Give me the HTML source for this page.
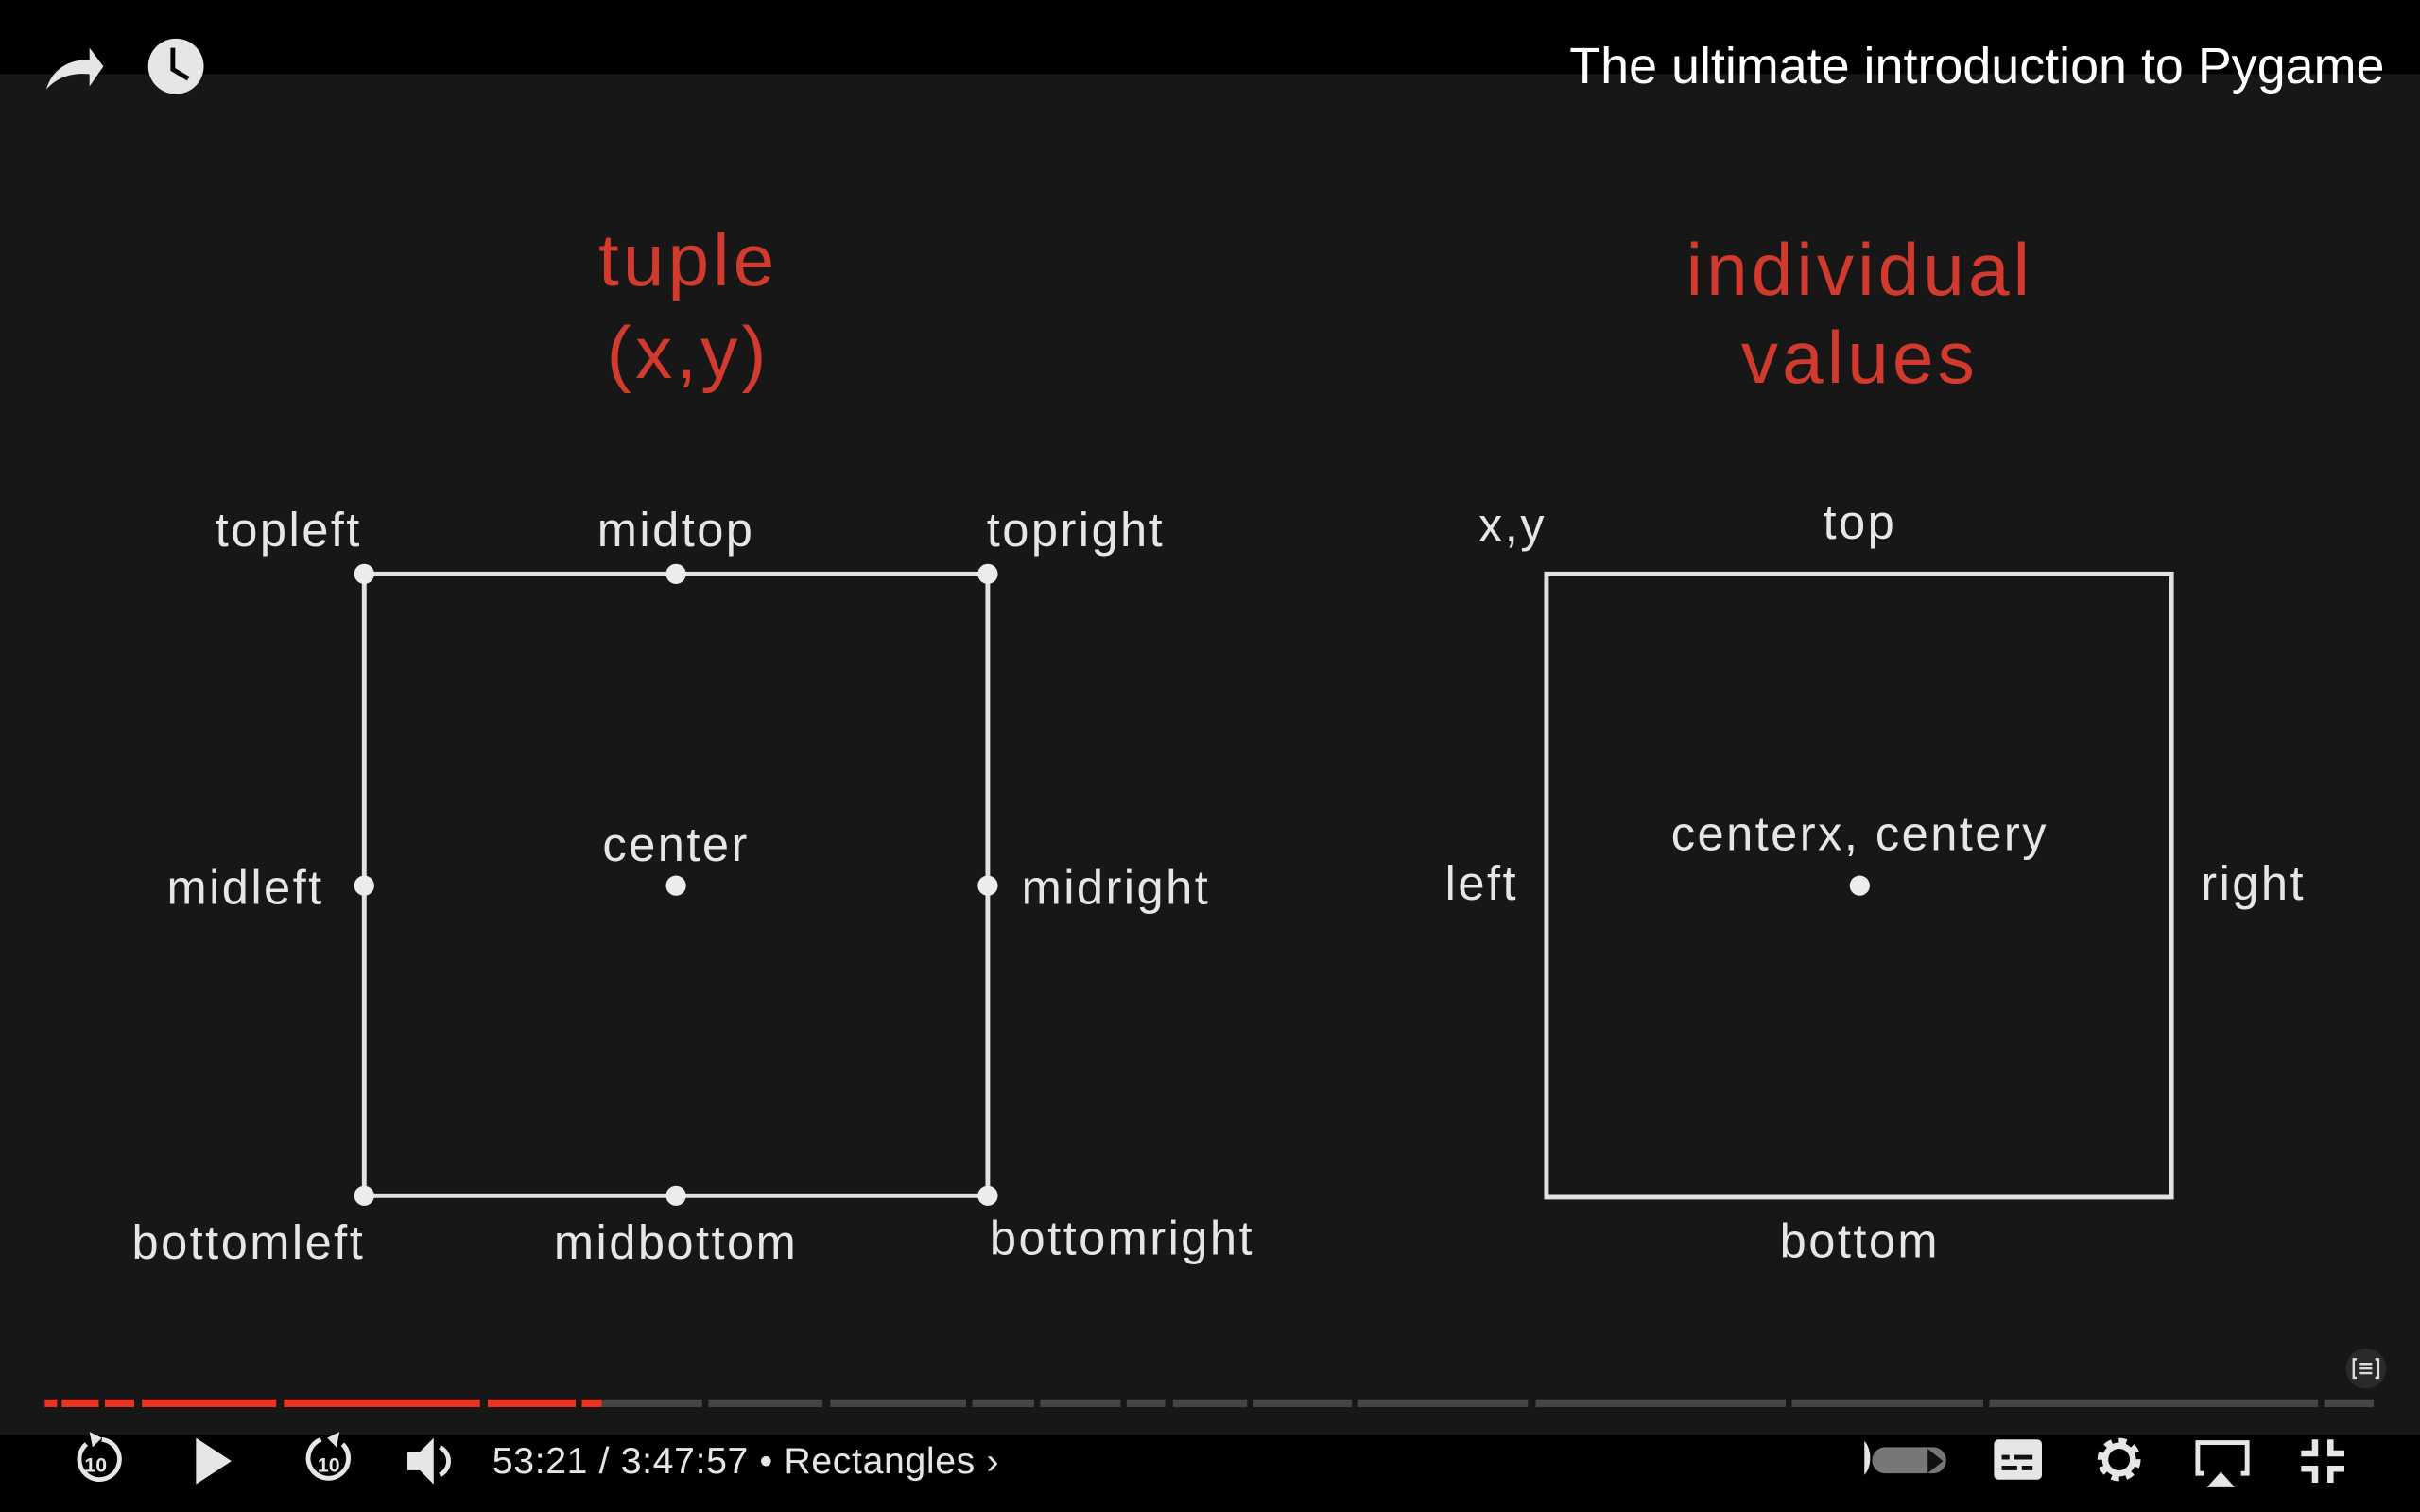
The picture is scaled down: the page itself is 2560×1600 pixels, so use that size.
<!DOCTYPE html>
<html><head><style>
html,body{margin:0;padding:0;background:#000;width:2560px;height:1600px;overflow:hidden}
svg{display:block}
</style></head><body>
<svg width="2560" height="1600" viewBox="0 0 1568 980" xmlns="http://www.w3.org/2000/svg" font-family="Liberation Sans, sans-serif">
<rect width="1568" height="980" fill="#000"/>
<rect y="48" width="1568" height="882" fill="#171717"/>
<g fill="#d23a2e" font-size="48" text-anchor="middle" letter-spacing="2.5">
<text x="446" y="185">tuple</text>
<text x="446" y="245">(x,y)</text>
<text x="1205" y="191">individual</text>
<text x="1205" y="248">values</text>
</g>
<g fill="none" stroke="#e2e2e2" stroke-width="3">
<rect x="236" y="372" width="404" height="403"/>
<rect x="1002" y="372" width="405" height="404"/>
</g>
<g fill="#ececec">
<circle cx="236" cy="372" r="6.5"/><circle cx="438" cy="372" r="6.5"/><circle cx="640" cy="372" r="6.5"/>
<circle cx="236" cy="574" r="6.5"/><circle cx="438" cy="574" r="6.5"/><circle cx="640" cy="574" r="6.5"/>
<circle cx="236" cy="775" r="6.5"/><circle cx="438" cy="775" r="6.5"/><circle cx="640" cy="775" r="6.5"/>
<circle cx="1205" cy="574" r="6.5"/>
</g>
<g fill="#e6e6e6" font-size="31" text-anchor="middle" letter-spacing="1.5">
<text x="187" y="354">topleft</text>
<text x="438" y="354">midtop</text>
<text x="697" y="354">topright</text>
<text x="159" y="586">midleft</text>
<text x="438" y="558">center</text>
<text x="723" y="586">midright</text>
<text x="161" y="816">bottomleft</text>
<text x="438" y="816">midbottom</text>
<text x="727" y="813">bottomright</text>
<text x="980" y="351">x,y</text>
<text x="1205" y="349">top</text>
<text x="960" y="583">left</text>
<text x="1205" y="551">centerx, centery</text>
<text x="1460" y="583">right</text>
<text x="1205" y="815">bottom</text>
</g>
<text x="1545" y="54" fill="#fff" font-size="33" text-anchor="end">The ultimate introduction to Pygame</text>
<path d="M30 58 C34 44 46 38 58 39 L58 31 L67 43 L58 56 L58 48 C46 47 37 50 30 58 Z" fill="#e6e6e6"/>
<circle cx="114" cy="43" r="18" fill="#e6e6e6"/>
<path d="M112 31 V45 L122 51" stroke="#000" stroke-width="3" fill="none"/>
<g fill="#eb3323">
<rect x="29" y="907" width="8" height="5"/><rect x="40" y="907" width="24" height="5"/><rect x="68" y="907" width="19" height="5"/><rect x="92" y="907" width="87" height="5"/><rect x="184" y="907" width="127" height="5"/><rect x="316" y="907" width="57" height="5"/><rect x="377" y="907" width="13" height="5"/>
</g>
<g fill="#454545">
<rect x="390" y="907" width="65" height="5"/><rect x="459" y="907" width="74" height="5"/><rect x="538" y="907" width="88" height="5"/><rect x="630" y="907" width="40" height="5"/><rect x="674" y="907" width="52" height="5"/><rect x="730" y="907" width="25" height="5"/><rect x="760" y="907" width="48" height="5"/><rect x="812" y="907" width="64" height="5"/><rect x="880" y="907" width="110" height="5"/><rect x="995" y="907" width="162" height="5"/><rect x="1161" y="907" width="124" height="5"/><rect x="1289" y="907" width="213" height="5"/><rect x="1506" y="907" width="32" height="5"/>
</g>
<circle cx="1533" cy="887" r="13" fill="#2a2a2a"/>
<path d="M1527 881h-2v12h2M1539 881h2v12h-2M1529 884h8M1529 887h8M1529 890h8" stroke="#ddd" stroke-width="1.5" fill="none"/>
<g fill="none" stroke="#e6e6e6" stroke-width="3">
<path d="M56 936 A13 13 0 1 0 66 933"/>
<path d="M222 936 A13 13 0 1 1 208 933"/>
</g>
<path d="M58 928 L66 932 L60 938 Z" fill="#e6e6e6"/>
<path d="M220 928 L212 932 L218 938 Z" fill="#e6e6e6"/>
<text x="62" y="954" fill="#e6e6e6" font-size="13" text-anchor="middle" font-weight="bold">10</text>
<text x="213" y="954" fill="#e6e6e6" font-size="13" text-anchor="middle" font-weight="bold">10</text>
<path d="M127 932 L150 947 L127 962 Z" fill="#e6e6e6"/>
<path d="M264 941 h8 l9 -9 v30 l-9 -9 h-8 Z" fill="#e6e6e6"/>
<path d="M285 938 a10 10 0 0 1 0 18" stroke="#e6e6e6" stroke-width="3" fill="none"/>
<text x="319" y="955" fill="#e6e6e6" font-size="24" letter-spacing="0.4">53:21 / 3:47:57 • Rectangles ›</text>
<rect x="1213" y="938" width="48" height="17" rx="8.5" fill="#777"/>
<path d="M1208 934 a8 13 0 0 1 0 22 Z" fill="#e6e6e6"/>
<path d="M1249 939 l10 8 l-10 8" fill="#111"/>
<rect x="1292" y="933" width="31" height="26" rx="3" fill="#e6e6e6"/>
<path d="M1297 943h5v3h-5zM1305 943h12v3h-12zM1297 950h10v3h-10zM1310 950h7v3h-7z" fill="#111"/>
<circle cx="1373" cy="946" r="11" fill="none" stroke="#e6e6e6" stroke-width="6" stroke-dasharray="4.5 4.1"/>
<circle cx="1373" cy="946" r="9" fill="none" stroke="#e6e6e6" stroke-width="4"/>
<path d="M1428 955 h-4 v-20 h32 v20 h-4" stroke="#e6e6e6" stroke-width="3" fill="none"/>
<path d="M1430 964 L1439 954 L1448 964 Z" fill="#e6e6e6"/>
<path d="M1500 933 v9 h-9 M1510 933 v9 h9 M1500 961 v-9 h-9 M1510 961 v-9 h9" stroke="#e6e6e6" stroke-width="4" fill="none"/>
</svg>
</body></html>
